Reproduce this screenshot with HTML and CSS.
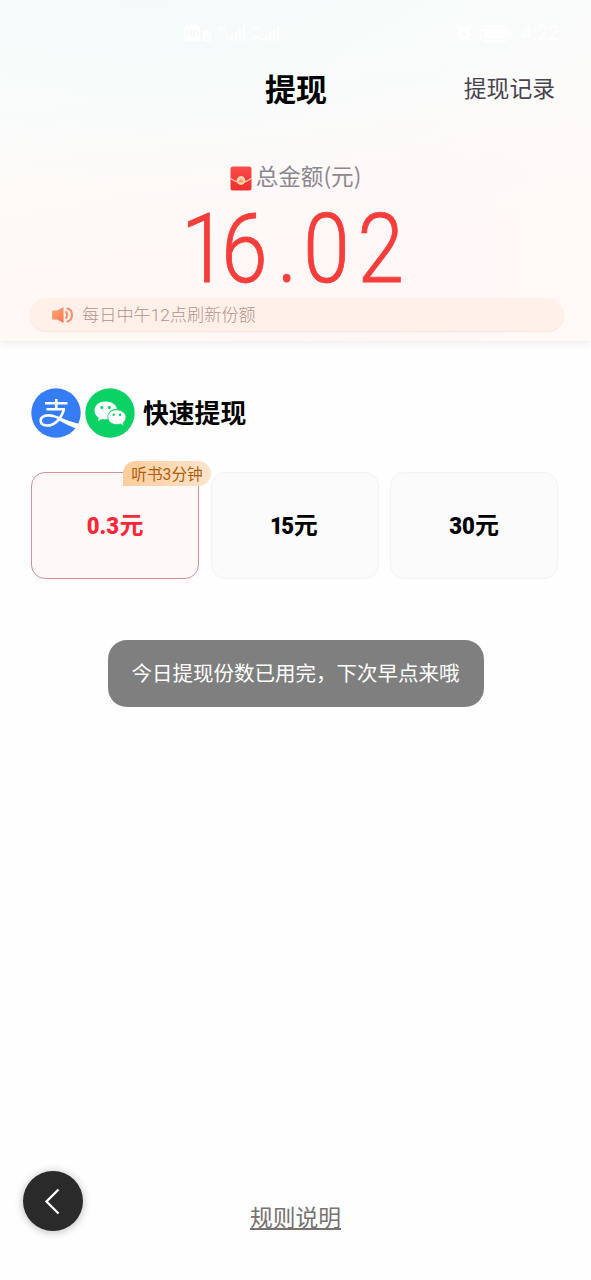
FILE: index.html
```html
<!DOCTYPE html>
<html lang="zh-CN">
<head>
<meta charset="utf-8">
<meta name="viewport" content="width=device-width, initial-scale=1">
<title>提现</title>
<link rel="stylesheet" href="styles.css">
</head>
<body>
<main class="page">
  <header class="hero">
    <div class="status">
      <svg class="signals" width="98" height="20" viewBox="0 0 98 20" fill="#fff">
        <rect x="0" y="2" width="16" height="16" rx="3"/>
        <text class="hd" x="1.500" y="14">HD</text>
        <path fill-rule="evenodd" d="M19 8H24L27 11V18H19ZM21 11V12H24V13L21 15V16.500H25.500V15.500H23L25.500 13.500V11Z"/>
        <text class="net" x="33" y="8">4G</text>
        <path d="M43 15h2v3h-2zM47 12h2v6h-2zM51 9h2v9h-2zM55 6h2v12h-2zM59 2h2v16h-2z"/>
        <text class="net" x="67" y="8">5G</text>
        <path d="M68 15l3-4v2h4v2h-4v3zM77 15h2v3h-2zM81 12h2v6h-2zM85 9h2v9h-2zM89 6h2v12h-2zM93 2h2v16h-2z"/>
      </svg>
      <div class="status-right">
        <svg width="16" height="17" viewBox="0 0 16 17"><circle cx="8" cy="8.500" r="6.500" fill="#fff"/><path d="M1 4L4 1M15 4L12 1M4 13L2 16M12 13L14 16" stroke="#fff" stroke-width="2"/><path d="M8 5V9L10 11" fill="none" stroke="#f4f9f8" stroke-width="1.500"/></svg>
        <svg width="33" height="17" viewBox="0 0 33 17"><rect x="1" y="1" width="27" height="15" rx="4" fill="none" stroke="#fff" stroke-width="1.500"/><rect x="3.500" y="3.500" width="22" height="10" rx="2" fill="#fff"/><path d="M30.500 5V12" stroke="#fff" stroke-width="2"/></svg>
        <span class="clock">4:22</span>
      </div>
    </div>
    <nav class="nav">
      <h1 class="title">提现</h1>
      <a class="history">提现记录</a>
    </nav>
    <div class="total">
      <svg width="22" height="25" viewBox="0 0 22 25">
        <defs><linearGradient id="packet" x2="0" y2="1"><stop stop-color="#fb4b48"/><stop offset="1" stop-color="#ef302f"/></linearGradient></defs>
        <rect x=".5" y=".5" width="21" height="24" rx="2.500" fill="url(#packet)"/>
        <path d="M.5 11.500Q11 20 21.500 11.500V13Q11 21 .5 13Z" fill="#ffc8a4"/>
        <circle cx="11" cy="14.500" r="4.400" fill="#fdd5ad"/>
        <path d="M8.800 15L11 12.500L13.200 15V16.500H8.800Z" fill="#fa9e65"/>
      </svg>
      <span>总金额(元)</span>
    </div>
    <div class="amount"><span class="one">1</span><span class="six">6</span>.<span class="zero">0</span>2</div>
    <div class="notice">
      <svg width="22" height="18" viewBox="0 0 22 18">
        <defs><linearGradient id="horn" x2="1" y2="1"><stop stop-color="#ffad78"/><stop offset="1" stop-color="#fb7550"/></linearGradient></defs>
        <path d="M1 4.500H5L11.500 1V17L5 13.500H1Q0 13.500 0 12.500V5.500Q0 4.500 1 4.500Z" fill="url(#horn)"/>
        <path d="M14 6Q16.500 9 14 12M15.500 2.500C21.500 4.500 21.500 13.500 15.500 15.500" fill="none" stroke="#fa8c6b" stroke-width="2" stroke-linecap="round"/>
      </svg>
      <span>每日中午12点刷新份额</span>
    </div>
  </header>

  <section class="methods">
    <svg width="50" height="50" viewBox="0 0 50 50">
      <circle cx="25" cy="25" r="24.700" fill="#357cf6"/>
      <g fill="none" stroke="#fff" stroke-width="2.600">
        <path d="M14 15.300H36.500M25.300 11V21.500M15.500 21.300H34"/>
        <path d="M33 21.300C30 31 23.500 38 15.500 37.500C8.500 37 7.500 30 14 27.800C22 25.500 31 32 46.500 38.500"/>
      </g>
      <path d="M28 30Q38 33 48.500 36L46 41Q36 37 27 32Z" fill="#fff"/>
    </svg>
    <svg width="50" height="50" viewBox="0 0 50 50">
      <circle cx="25" cy="25" r="24.700" fill="#0bd265"/>
      <path d="M20.500 13.500C13.700 13.500 9.500 17.500 9.500 22.500C9.500 25.500 11 28 13.800 29.700L12.800 33L17 31Q20 31.800 23 31C22 24 27 20.500 32 20.700C31 16.300 26.500 13.500 20.500 13.500Z" fill="#fff"/>
      <path d="M31.500 21.800C26.500 21.800 22.800 25 22.800 29.200C22.800 33.600 27 36.600 31.500 36.600Q33.500 36.600 35.500 36L38.800 38L38 34.800C40 33.300 41 31.300 41 29.200C41 25 36.500 21.800 31.500 21.800Z" fill="#fff" stroke="#0bd265" stroke-width=".8"/>
      <g fill="#0bd265"><circle cx="16.800" cy="19.500" r="1.500"/><circle cx="24.300" cy="19.500" r="1.500"/><circle cx="28.700" cy="26.800" r="1.200"/><circle cx="35" cy="26.800" r="1.200"/></g>
    </svg>
    <h2 class="methods-title">快速提现</h2>
  </section>

  <section class="options">
    <div class="option selected"><span class="badge">听书3分钟</span><b>0.3</b><span>元</span></div>
    <div class="option"><b class="tight">15</b><span>元</span></div>
    <div class="option"><b>30</b><span>元</span></div>
  </section>

  <div class="toast">今日提现份数已用完，下次早点来哦</div>

  <footer class="footer">
    <button class="back" aria-label="返回"><svg width="60" height="60" viewBox="0 0 60 60"><path d="M35.500 18.500L23.500 30.500L35.500 42.500" fill="none" stroke="#fff" stroke-width="2.300"/></svg></button>
    <a class="rules">规则说明</a>
  </footer>
</main>
</body>
</html>
```
FILE: styles.css
```css
* { box-sizing: border-box; }
body {
  margin: 0;
  background: #fefefe;
  font-family: Roboto, "Noto Sans CJK SC", sans-serif;
}
svg { display: block; flex: none; }
h1, h2 { margin: 0; }
.page { height: 1280px; display: flex; flex-direction: column; }
.hero {
  height: 341px;
  flex: none;
  background:
    radial-gradient(ellipse 480px 190px at 25% 0, rgba(243, 251, 250, .9), rgba(246, 251, 250, 0)),
    linear-gradient(174deg, #f9fcfb 0%, #fbfbfa 30%, rgba(253, 250, 248, 0) 68%),
    linear-gradient(90deg, #fff8f4, #fff7f7 75%, #fff9f7);
  box-shadow: 0 2px 9px rgba(90, 70, 70, .09);
}
.status {
  height: 66px;
  padding: 0 31px 0 184px;
  display: flex;
  align-items: center;
  justify-content: space-between;
}
.net { font: 700 8px Roboto, sans-serif; }
.hd { font: 700 9.500px Roboto, sans-serif; fill: #f3f9f8; }
.status-right { display: flex; align-items: center; gap: 8px; color: #fff; }
.clock { width: 39px; font-size: 20px; line-height: 20px; }
.nav {
  height: 48px;
  padding: 0 36px;
  display: grid;
  grid-template-columns: 1fr auto 1fr;
  align-items: center;
}
.title { grid-column: 2; font-size: 31px; line-height: 46px; font-weight: 700; color: #000; padding: 2px 0 0 1px; }
.history { justify-self: end; font-size: 22.8px; line-height: 34px; color: #49434f; margin-top: -1px; }
.total {
  height: 34px;
  margin-top: 46px;
  display: flex;
  justify-content: center;
  gap: 4px;
  font-family: "Noto Sans CJK SC", sans-serif;
  font-size: 22.6px;
  line-height: 34px;
  color: #8d8790;
}
.total svg { margin-top: 6px; }
.total span { margin-top: -1px; }
.amount {
  height: 104px;
  text-align: center;
  font-size: 96px;
  line-height: 111px;
  font-weight: 300;
  letter-spacing: 7px;
  color: #f53e3b;
  -webkit-text-stroke: .9px #f53e3b;
  transform: scaleX(.87);
}
.one { letter-spacing: -7px; }
.six { letter-spacing: 11px; }
.zero { letter-spacing: 9px; }
.notice {
  height: 33px;
  margin: 0 27px 0 30px;
  padding-left: 22px;
  border-radius: 17px;
  display: flex;
  align-items: center;
  gap: 8px;
  background: #fff0ea;
  box-shadow: 0 1px 1px #fde2d9;
  font-size: 17.2px;
  font-weight: 300;
  color: #b5928a;
}
.notice span { margin-top: -2px; }
.methods { display: flex; align-items: center; gap: 4px; height: 50px; margin: 47px 0 0 31px; }
.methods-title { margin-left: 4px; padding-top: 2px; font-size: 25.8px; line-height: 38px; font-weight: 700; }
.options {
  display: grid;
  grid-template-columns: repeat(3, 168px);
  gap: 11.5px;
  margin: 34px 0 0 31px;
  height: 107px;
}
.option {
  position: relative;
  display: flex;
  align-items: center;
  justify-content: center;
  border: 1px solid #f3f3f3;
  border-radius: 14px;
  background: #fbfbfb;
  font-size: 24px;
  font-weight: 700;
  line-height: 36px;
  color: #000;
}
.option b { margin-left: -2px; transform: scaleX(.92); transform-origin: right; }
.option .tight { letter-spacing: -1.7px; margin: 0 1px 0 -3px; }
.option > span:last-child { padding-top: 1px; }
.selected { border-color: #db9099; background: #fff8f8; color: #ff2637; }
.badge {
  position: absolute;
  top: -12px;
  right: -13px;
  width: 88px;
  height: 25px;
  border-radius: 13px 13px 13px 0;
  background: linear-gradient(90deg, #fdcc9c, #ffe5cd);
  text-align: center;
  font-size: 15.7px;
  font-weight: 400;
  line-height: 28px;
  color: #af5d0e;
}
.toast {
  align-self: center;
  width: 376px;
  height: 67px;
  margin-top: 61px;
  border-radius: 19px;
  background: #7f7f7f;
  text-align: center;
  font-size: 20.5px;
  line-height: 68px;
  color: #fff;
  white-space: nowrap;
}
.footer {
  height: 60px;
  margin: auto 23px 49px;
  display: grid;
  grid-template-columns: 1fr auto 1fr;
}
.back {
  width: 60px;
  height: 60px;
  padding: 0;
  border: 0;
  border-radius: 50%;
  background: #2a2a2a;
  box-shadow: 0 1px 8px rgba(0, 0, 0, .28);
}
.rules {
  align-self: end;
  margin-bottom: -5px;
  font-size: 22.8px;
  line-height: 34px;
  color: #777170;
  text-decoration: underline;
  text-decoration-thickness: 1.5px;
  text-underline-offset: 2px;
  text-decoration-skip-ink: none;
}
```
